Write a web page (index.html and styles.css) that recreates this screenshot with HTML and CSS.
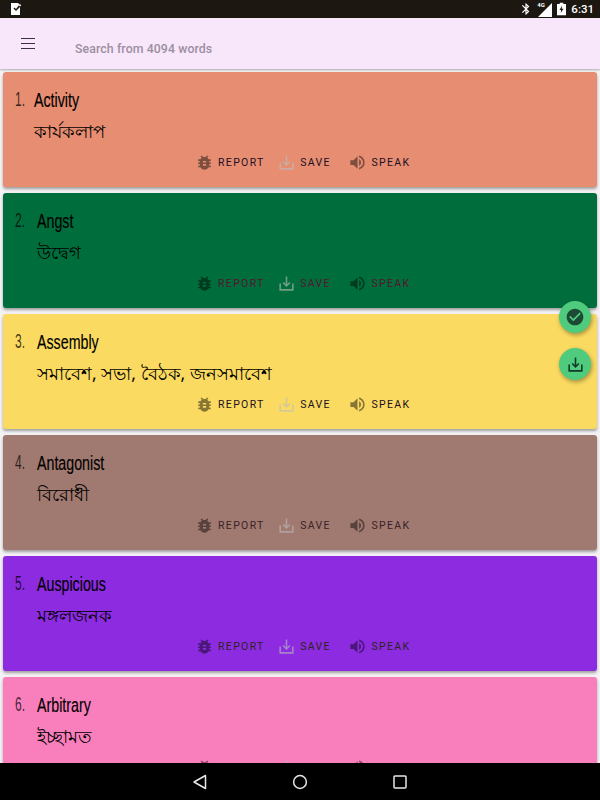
FILE: index.html
```html
<!DOCTYPE html>
<html lang="en">
<head>
    <meta charset="UTF-8">
    <meta name="viewport" content="width=device-width, initial-scale=1.0">
    <title>Word list</title>
    <link rel="stylesheet" href="styles.css">
</head>
<body>
    <svg class="defs" width="0" height="0">
        <symbol id="bug" viewBox="0 0 24 24"><path d="M20 8h-2.81c-.45-.78-1.07-1.45-1.82-1.96L17 4.41 15.59 3l-2.17 2.17C12.96 5.06 12.49 5 12 5s-.96.06-1.41.17L8.41 3 7 4.41l1.62 1.63C7.88 6.55 7.26 7.22 6.81 8H4v2h2.09c-.05.33-.09.66-.09 1v1H4v2h2v1c0 .34.04.67.09 1H4v2h2.81c1.04 1.79 2.97 3 5.19 3s4.15-1.21 5.19-3H20v-2h-2.09c.05-.33.09-.66.09-1v-1h2v-2h-2v-1c0-.34-.04-.67-.09-1H20V8zm-6 8h-4v-2h4v2zm0-4h-4v-2h4v2z"/></symbol>
        <symbol id="save" viewBox="0 0 24 24"><path d="M19 12v7H5v-7H3v9h18v-9h-2zm-6 .67l2.59-2.58L17 11.5l-5 5-5-5 1.41-1.41L11 12.67V3h2v9.67z"/></symbol>
        <symbol id="speak" viewBox="0 0 24 24"><path d="M3 9v6h4l5 5V4L7 9H3zm13.5 3c0-1.77-1.02-3.29-2.5-4.03v8.05c1.48-.73 2.5-2.25 2.5-4.02zM14 3.23v2.06c2.89.86 5 3.54 5 6.71s-2.11 5.85-5 6.71v2.06c4.01-.91 7-4.49 7-8.77s-2.99-7.86-7-8.77z"/></symbol>
    </svg>

    <div class="status-bar">
        <svg class="status-app" viewBox="0 0 12 14" width="12" height="14"><path fill="#fff" d="M1 1h7l1.5 1.5L6 7 4.5 5.5 3.5 6.5 6 9l4-4v8H1z"/><path fill="#fff" d="M10 2l1.2 1.2L10 4.5 8.8 3.3z"/></svg>
        <div class="status-right">
            <svg viewBox="0 0 24 24" width="14" height="14"><path fill="#fff" d="M17.71 7.71L12 2h-1v7.59L6.41 5 5 6.41 10.59 12 5 17.59 6.41 19 11 14.41V22h1l5.71-5.71-4.3-4.29 4.3-4.29zM13 5.83l1.88 1.88L13 9.59V5.83zm1.88 10.46L13 18.17v-3.76l1.88 1.88z"/></svg>
            <div class="signal">
                <span class="signal-label">4G</span>
                <svg viewBox="0 0 14 14" width="14" height="14"><path fill="#fff" d="M14 0v14H0z"/></svg>
            </div>
            <svg viewBox="0 0 10 14" width="9" height="14"><path fill="#fff" d="M3 0h4v1.5h3V14H0V1.5h3z"/><path fill="#1c1811" d="M5.5 3.5L2.8 8.2h1.8L4.2 11.5 7.2 6.8H5.3z"/></svg>
            <span class="clock">6:31</span>
        </div>
    </div>

    <header class="app-bar">
        <div class="menu-icon"><span></span><span></span><span></span></div>
        <div class="search">Search from 4094 words</div>
    </header>

    <main class="word-list">
        <section class="card card-1">
            <div class="entry">
                <span class="num num-narrow">1.</span>
                <div>
                    <div class="word">Activity</div>
                    <div class="meaning">কার্যকলাপ</div>
                </div>
            </div>
            <div class="actions">
                <span class="action"><svg class="ic"><use href="#bug"/></svg>REPORT</span>
                <span class="action"><svg class="ic ic-save"><use href="#save"/></svg>SAVE</span>
                <span class="action action-speak"><svg class="ic"><use href="#speak"/></svg>SPEAK</span>
            </div>
        </section>
        <section class="card card-2">
            <div class="entry">
                <span class="num">2.</span>
                <div>
                    <div class="word">Angst</div>
                    <div class="meaning">উদ্বেগ</div>
                </div>
            </div>
            <div class="actions">
                <span class="action"><svg class="ic"><use href="#bug"/></svg>REPORT</span>
                <span class="action"><svg class="ic ic-save"><use href="#save"/></svg>SAVE</span>
                <span class="action action-speak"><svg class="ic"><use href="#speak"/></svg>SPEAK</span>
            </div>
        </section>
        <section class="card card-3">
            <div class="entry">
                <span class="num">3.</span>
                <div>
                    <div class="word">Assembly</div>
                    <div class="meaning">সমাবেশ, সভা, বৈঠক, জনসমাবেশ</div>
                </div>
            </div>
            <div class="actions">
                <span class="action"><svg class="ic"><use href="#bug"/></svg>REPORT</span>
                <span class="action"><svg class="ic ic-save"><use href="#save"/></svg>SAVE</span>
                <span class="action action-speak"><svg class="ic"><use href="#speak"/></svg>SPEAK</span>
            </div>
        </section>
        <section class="card card-4">
            <div class="entry">
                <span class="num">4.</span>
                <div>
                    <div class="word">Antagonist</div>
                    <div class="meaning">বিরোধী</div>
                </div>
            </div>
            <div class="actions">
                <span class="action"><svg class="ic"><use href="#bug"/></svg>REPORT</span>
                <span class="action"><svg class="ic ic-save"><use href="#save"/></svg>SAVE</span>
                <span class="action action-speak"><svg class="ic"><use href="#speak"/></svg>SPEAK</span>
            </div>
        </section>
        <section class="card card-5">
            <div class="entry">
                <span class="num">5.</span>
                <div>
                    <div class="word">Auspicious</div>
                    <div class="meaning">মঙ্গলজনক</div>
                </div>
            </div>
            <div class="actions">
                <span class="action"><svg class="ic"><use href="#bug"/></svg>REPORT</span>
                <span class="action"><svg class="ic ic-save"><use href="#save"/></svg>SAVE</span>
                <span class="action action-speak"><svg class="ic"><use href="#speak"/></svg>SPEAK</span>
            </div>
        </section>
        <section class="card card-6">
            <div class="entry">
                <span class="num">6.</span>
                <div>
                    <div class="word">Arbitrary</div>
                    <div class="meaning">ইচ্ছামত</div>
                </div>
            </div>
            <div class="actions">
                <span class="action"><svg class="ic"><use href="#bug"/></svg>REPORT</span>
                <span class="action"><svg class="ic ic-save"><use href="#save"/></svg>SAVE</span>
                <span class="action action-speak"><svg class="ic"><use href="#speak"/></svg>SPEAK</span>
            </div>
        </section>
    </main>

    <button class="fab fab-check">
        <svg viewBox="0 0 24 24" width="20" height="20"><path fill="#1c4a35" d="M12 2C6.48 2 2 6.48 2 12s4.48 10 10 10 10-4.48 10-10S17.52 2 12 2zm-2 15l-5-5 1.41-1.41L10 14.17l7.59-7.59L19 8l-9 9z"/></svg>
    </button>
    <button class="fab fab-save">
        <svg viewBox="0 0 24 24" width="19" height="19"><use href="#save" fill="#123a28"/></svg>
    </button>

    <nav class="nav-bar">
        <svg viewBox="0 0 16 16" width="16" height="16"><path fill="none" stroke="#e8e8e8" stroke-width="1.5" d="M13.5 1.5v13L2 8z" stroke-linejoin="round"/></svg>
        <svg viewBox="0 0 16 16" width="16" height="16"><circle cx="8" cy="8" r="6.4" fill="none" stroke="#e8e8e8" stroke-width="1.5"/></svg>
        <svg viewBox="0 0 16 16" width="16" height="16"><rect x="2" y="2" width="12" height="12" rx="1" fill="none" stroke="#e8e8e8" stroke-width="1.5"/></svg>
    </nav>
</body>
</html>
```

FILE: styles.css
```css
* {
    box-sizing: border-box;
}
html, body {
    margin: 0;
    height: 800px;
    overflow: hidden;
}
body {
    position: relative;
    width: 600px;
    background-color: #f4f2f4;
    font-family: "Roboto", "Liberation Sans", sans-serif;
}
.defs {
    position: absolute;
}

/* status bar */
.status-bar {
    height: 18px;
    background-color: #1c1811;
    display: flex;
    align-items: center;
    justify-content: space-between;
    padding: 0 6px 0 10px;
}
.status-app {
    display: block;
}
.status-right {
    display: flex;
    align-items: center;
    gap: 5px;
}
.signal {
    position: relative;
    width: 14px;
    height: 14px;
}
.signal-label {
    position: absolute;
    left: -1px;
    top: -1px;
    color: #fff;
    font-size: 6px;
    font-weight: 700;
}
.clock {
    color: #fff;
    font-size: 11.5px;
    font-weight: 500;
}

/* app bar */
.app-bar {
    height: 51px;
    background-color: #f8e6fb;
    box-shadow: 0 1px 2px rgba(0, 0, 0, 0.3);
    display: flex;
    align-items: center;
    padding-left: 21px;
    position: relative;
}
.menu-icon {
    width: 14px;
    display: flex;
    flex-direction: column;
    gap: 3.5px;
}
.menu-icon span {
    height: 1.5px;
    background-color: #3a3440;
}
.search {
    margin-left: 40px;
    margin-top: 11px;
    color: #9c8fa0;
    font-size: 12.3px;
    font-weight: 500;
    letter-spacing: 0.1px;
}

/* cards */
.word-list {
    padding: 3px 3px 0;
    display: flex;
    flex-direction: column;
    gap: 6px;
}
.card {
    height: 115px;
    flex: none;
    border-radius: 3px;
    box-shadow: 0 2px 3px rgba(0, 0, 0, 0.35);
    padding: 15px 0 0 12px;
}
.card-1 { background-color: #e68d72; }
.card-2 { background-color: #006e3c; }
.card-3 { background-color: #fada60; }
.card-4 { background-color: #a07970; }
.card-5 { background-color: #8c2be0; }
.card-6 { background-color: #f97fbc; }

.entry {
    display: flex;
}
.num {
    width: 22px;
    flex: none;
    font-family: "Liberation Sans", sans-serif;
    font-size: 20px;
    line-height: 24px;
    color: rgba(0, 0, 0, 0.75);
    transform: scaleX(0.6);
    transform-origin: left;
}
.num-narrow {
    width: 19px;
}
/* no condensed face is installed, so the titles get squeezed */
.word {
    font-family: "Liberation Sans", sans-serif;
    font-size: 19.5px;
    line-height: 26px;
    color: #000;
    white-space: nowrap;
    -webkit-text-stroke: 0.15px #000;
    transform: scaleX(0.73);
    transform-origin: left;
}
.meaning {
    margin-top: 6px;
    font-family: "Noto Sans", sans-serif;
    font-size: 17.6px;
    line-height: 24px;
    color: #000;
    white-space: nowrap;
}
.actions {
    display: flex;
    gap: 12.5px;
    margin: 10px 0 0 180px;
}
.action {
    display: flex;
    align-items: center;
    gap: 4px;
    font-size: 10.5px;
    letter-spacing: 1.35px;
    color: #1d0f24;
}
.action-speak {
    margin-left: 5px;
}
.ic {
    width: 19px;
    height: 19px;
    fill: #000;
    opacity: 0.45;
}
.ic-save {
    fill: #bdbdbd;
    opacity: 0.6;
}
.card-2 .action { color: #551530; }
.card-4 .action { color: #3a2228; }
.card-5 .action { color: #2e2420; }

/* floating buttons */
.fab {
    position: absolute;
    left: 559px;
    width: 32px;
    height: 32px;
    padding: 0;
    border: none;
    border-radius: 50%;
    background-color: #4ecb7d;
    box-shadow: 1px 2px 4px rgba(0, 0, 0, 0.35);
    display: flex;
    align-items: center;
    justify-content: center;
}
.fab-check { top: 301px; }
.fab-save { top: 348px; }

/* navigation bar */
.nav-bar {
    position: absolute;
    left: 0;
    right: 0;
    bottom: 0;
    height: 37px;
    background-color: #000;
    display: flex;
    align-items: center;
    justify-content: space-between;
    padding: 0 192px;
}
```
